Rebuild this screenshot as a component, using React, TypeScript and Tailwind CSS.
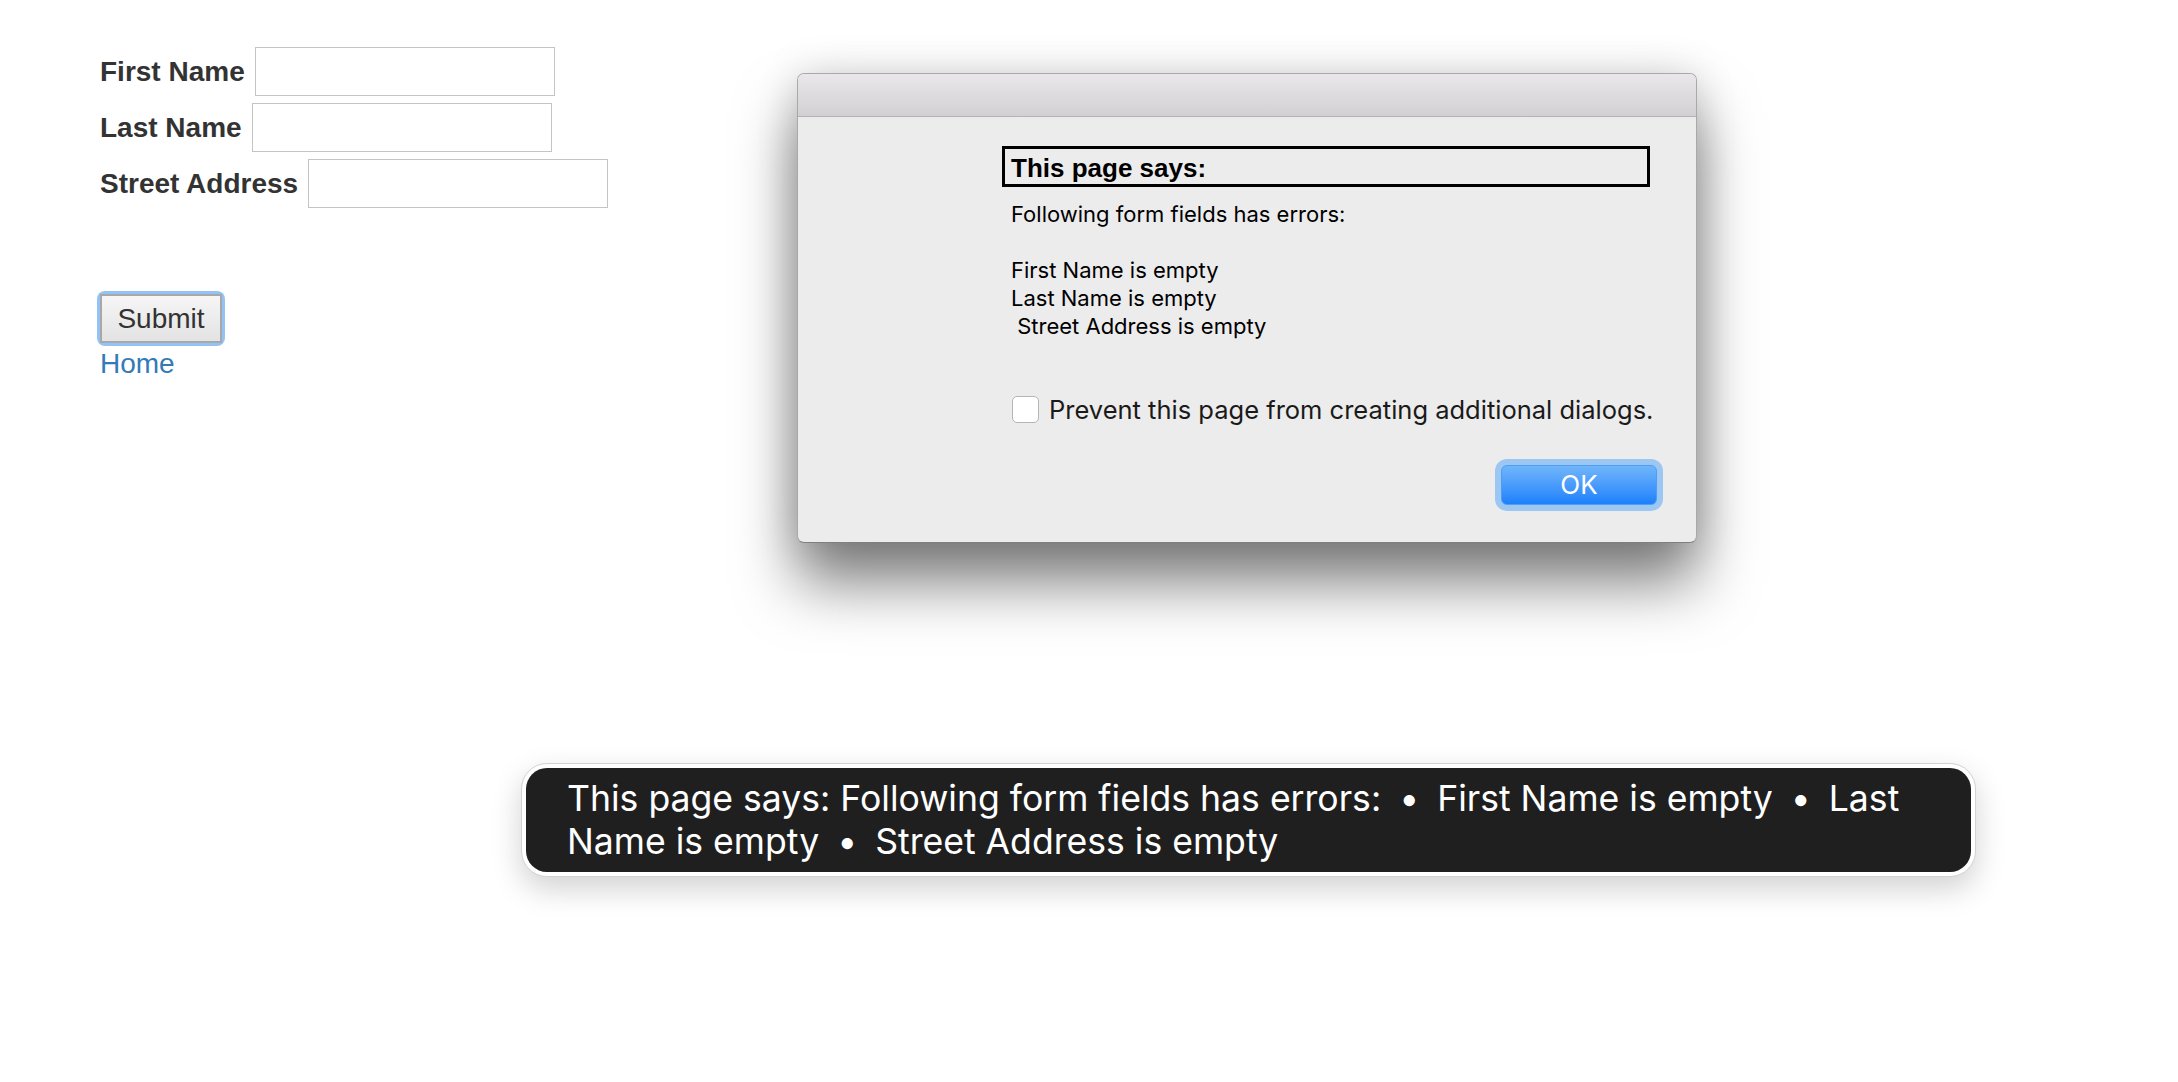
import React from "react";

function Field({ label }: { label: string }) {
  return (
    <div className="flex h-[49px] items-center gap-[10px]">
      <label className="text-[28px] font-bold leading-[32px] text-[#333333]">{label}</label>
      <input
        type="text"
        className="h-[49px] w-[300px] border border-[#c4c4c4] bg-white outline-none"
      />
    </div>
  );
}

function Sep() {
  return <span className="mx-[8px] inline-block">•</span>;
}

export default function App() {
  return (
    <div className="relative min-h-[1082px] w-full bg-white font-['Liberation_Sans',Arial,sans-serif]">
      <form className="flex flex-col items-start pl-[100px] pt-[47px]" onSubmit={(e) => e.preventDefault()}>
        <div className="flex flex-col gap-[7px]">
          <Field label="First Name" />
          <Field label="Last Name" />
          <Field label="Street Address" />
        </div>
        <div className="mt-[86px] rounded-[5px] shadow-[0_0_0_3px_#93c3f5]">
          <button
            type="submit"
            className="flex h-[49px] w-[122px] items-center justify-center border-2 border-[#a8a8a8] bg-linear-to-b from-[#f6f6f6] to-[#e3e3e3] text-[28px] leading-none text-[#333333]"
          >
            Submit
          </button>
        </div>
        <a href="#" className="mt-[5px] text-[28px] leading-[32px] text-[#337ab7]">
          Home
        </a>
      </form>

      {/* Dialog */}
      <div className="absolute left-[797px] top-[73px] w-[900px] overflow-hidden rounded-[7px] border border-[#a9a9a9] border-b-[#7f7f7f] bg-[#ececec] shadow-[0_40px_60px_rgba(0,0,0,0.5),0_0_40px_rgba(0,0,0,0.15)]">
        <div className="h-[43px] border-b border-[#b3b3b3] bg-linear-to-b from-[#e9e7e9] to-[#d2d0d2]" />
        <div className="pl-[204px] pr-[33px] pb-[31px] pt-[29px]">
          <div className="h-[41px] w-[648px] border-[3px] border-black pl-[6px] pt-[2px] text-[26px] font-bold leading-[35px] text-black">
            This page says:
          </div>
          <div className="mt-[13px] ml-[9px] whitespace-pre font-['Inter',sans-serif] text-[22px] leading-[28px] text-black">
            {"Following form fields has errors:\n\nFirst Name is empty\nLast Name is empty\n Street Address is empty"}
          </div>
          <div className="mt-[56px] ml-[10px] flex h-[27px] items-center gap-[10px]">
            <span className="h-[27px] w-[27px] rounded-[5px] border border-[#b5b5b5] bg-white" />
            <span className="font-['Inter',sans-serif] text-[25.5px] leading-[30px] text-[#1a1a1a]">
              Prevent this page from creating additional dialogs.
            </span>
          </div>
          <div className="mt-[36px] flex justify-end">
            <div className="rounded-[12px] bg-[#9cc7f3] p-[6px]">
              <button className="flex h-[40px] w-[156px] items-center justify-center rounded-[6px] border border-[#4f9cf4] bg-linear-to-b from-[#70b5fa] to-[#1a80fb] font-['Inter',sans-serif] text-[26px] leading-none text-white">
                OK
              </button>
            </div>
          </div>
        </div>
      </div>

      {/* Caption toast */}
      <div className="absolute left-[521px] top-[763px] w-[1455px] rounded-[26px] border border-[#d2d2d2] bg-white p-[4px] shadow-[0_12px_30px_rgba(0,0,0,0.18)]">
        <div className="rounded-[21px] bg-[#1f1f1f] px-[41px] py-[9px] font-['Inter',sans-serif] text-[35.6px] leading-[43px] text-white">
          This page says: Following form fields has errors: <Sep /> First Name is empty <Sep /> Last Name is empty{" "}
          <Sep /> Street Address is empty
        </div>
      </div>
    </div>
  );
}
